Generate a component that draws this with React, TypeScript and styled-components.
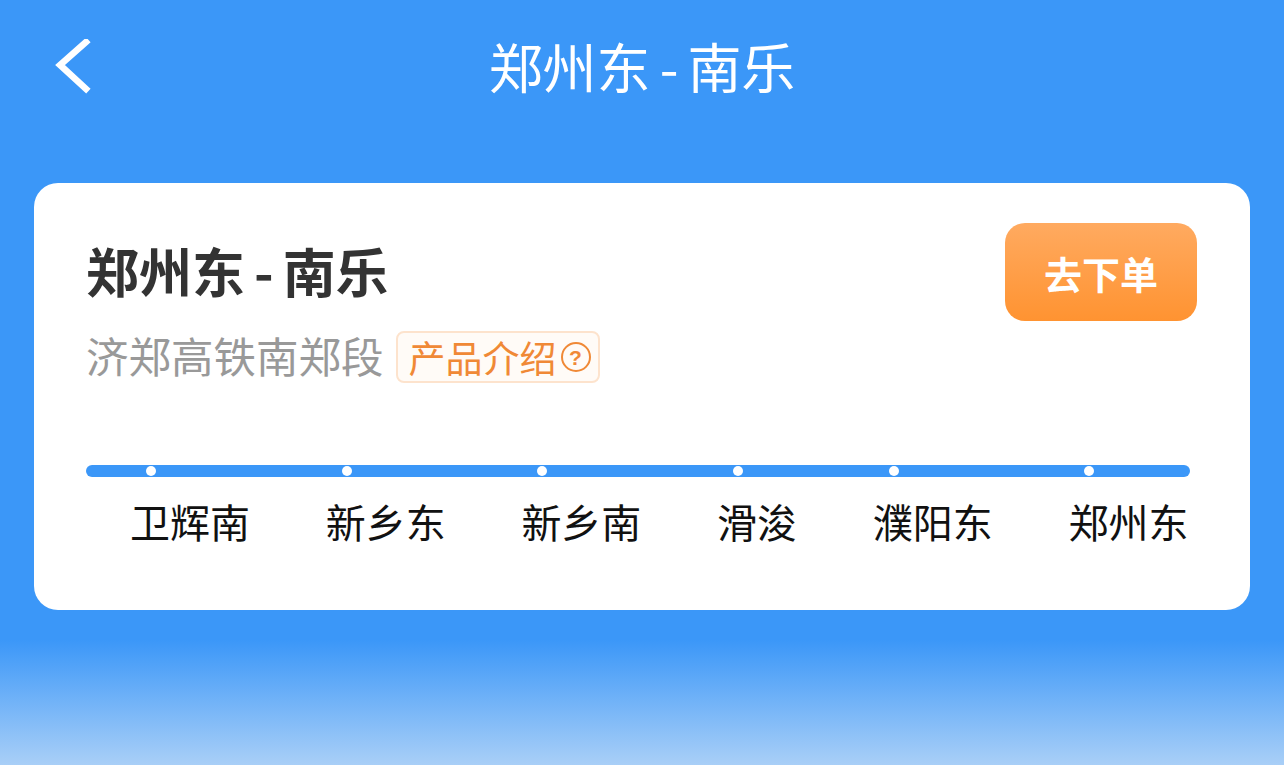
import styled, { createGlobalStyle } from "styled-components";

const stations = ["卫辉南", "新乡东", "新乡南", "滑浚", "濮阳东", "郑州东"];

const GlobalStyle = createGlobalStyle`
  html, body {
    margin: 0;
    padding: 0;
    background: #3b97f8;
    font-family: "Noto Sans CJK SC", "Noto Sans", sans-serif;
  }
`;

function App() {
  return (
    <Page>
      <GlobalStyle />
      <Header>
        <BackButton aria-label="返回">
          <svg width="40" height="56" viewBox="0 0 40 56" fill="none">
            <path
              d="M34 3 L8 26 L34 50"
              stroke="#fff"
              strokeWidth="6.5"
              strokeLinecap="square"
              strokeLinejoin="miter"
            />
          </svg>
        </BackButton>
        <HeaderTitle>
          郑州东<Dash>-</Dash>南乐
        </HeaderTitle>
        <span />
      </Header>

      <Card>
        <TopRow>
          <div>
            <Title>
              郑州东<Dash>-</Dash>南乐
            </Title>
            <SubRow>
              <Subtitle>济郑高铁南郑段</Subtitle>
              <Tag>
                产品介绍
                <Question>?</Question>
              </Tag>
            </SubRow>
          </div>
          <OrderButton>去下单</OrderButton>
        </TopRow>

        <Route>
          <Stations>
            {stations.map((name) => (
              <Station key={name}>
                <Dot />
                <StationName>{name}</StationName>
              </Station>
            ))}
          </Stations>
        </Route>
      </Card>
    </Page>
  );
}

const Page = styled.div`
  min-height: 765px;
  background: linear-gradient(
    to bottom,
    #3b97f8 0,
    #3b97f8 640px,
    #a9cff7 765px
  );
  overflow: hidden;
`;

const Header = styled.header`
  height: 136px;
  display: grid;
  grid-template-columns: 1fr auto 1fr;
  align-items: center;
`;

const BackButton = styled.button`
  justify-self: start;
  margin: 0 0 2px 52px;
  padding: 0;
  border: none;
  background: none;
  display: flex;
  cursor: pointer;
`;

const HeaderTitle = styled.h1`
  margin: 0 0 4px;
  font-size: 54px;
  font-weight: 400;
  color: #fff;
  line-height: 1;
  white-space: nowrap;
`;

const Dash = styled.span`
  margin: 0 9px;
`;

const Card = styled.section`
  margin: 47px 34px 0;
  height: 427px;
  box-sizing: border-box;
  padding: 40px 53px 0 52px;
  background: #fff;
  border-radius: 24px;
`;

const TopRow = styled.div`
  display: flex;
  justify-content: space-between;
  align-items: flex-start;
`;

const Title = styled.h2`
  margin: 21px 0 0;
  font-size: 53px;
  font-weight: 700;
  color: #333;
  line-height: 1;
  white-space: nowrap;
`;

const SubRow = styled.div`
  display: flex;
  align-items: center;
  gap: 12px;
  margin-top: 31px;
`;

const Subtitle = styled.span`
  font-size: 42.5px;
  color: #999;
  line-height: 1;
  white-space: nowrap;
`;

const Tag = styled.span`
  display: flex;
  align-items: center;
  gap: 4px;
  height: 52px;
  box-sizing: border-box;
  margin-top: 3px;
  padding: 0 7px 0 11px;
  border: 2px solid #fde3cd;
  border-radius: 8px;
  background: #fffbf7;
  color: #f08936;
  font-size: 37px;
  line-height: 1;
  white-space: nowrap;
`;

const Question = styled.span`
  width: 30px;
  height: 30px;
  box-sizing: border-box;
  border: 2px solid #f08936;
  border-radius: 50%;
  display: flex;
  align-items: center;
  justify-content: center;
  font-size: 21px;
  font-weight: 700;
  font-family: "Liberation Sans", sans-serif;
`;

const OrderButton = styled.button`
  flex-shrink: 0;
  width: 192px;
  height: 98px;
  border: none;
  border-radius: 20px;
  background: linear-gradient(to bottom, #ffaa60, #ff9331);
  color: #fff;
  font-family: inherit;
  font-size: 38px;
  font-weight: 700;
  cursor: pointer;
`;

const Route = styled.div`
  position: relative;
  margin: 82px 7px 0 0;

  &::before {
    content: "";
    position: absolute;
    top: 0;
    left: 0;
    right: 0;
    height: 12px;
    border-radius: 6px;
    background: #3b97f8;
  }
`;

const Stations = styled.div`
  position: relative;
  display: flex;
  gap: 75.7px;
  padding-left: 44px;
`;

const Station = styled.div`
  display: flex;
  flex-direction: column;
  align-items: flex-start;
  flex-shrink: 0;
`;

const Dot = styled.span`
  width: 10px;
  height: 10px;
  margin: 1px 0 0 16px;
  border-radius: 50%;
  background: #fff;
`;

const StationName = styled.span`
  margin-top: 25px;
  font-size: 40px;
  color: #111;
  line-height: 1;
  white-space: nowrap;
`;

export default App;
